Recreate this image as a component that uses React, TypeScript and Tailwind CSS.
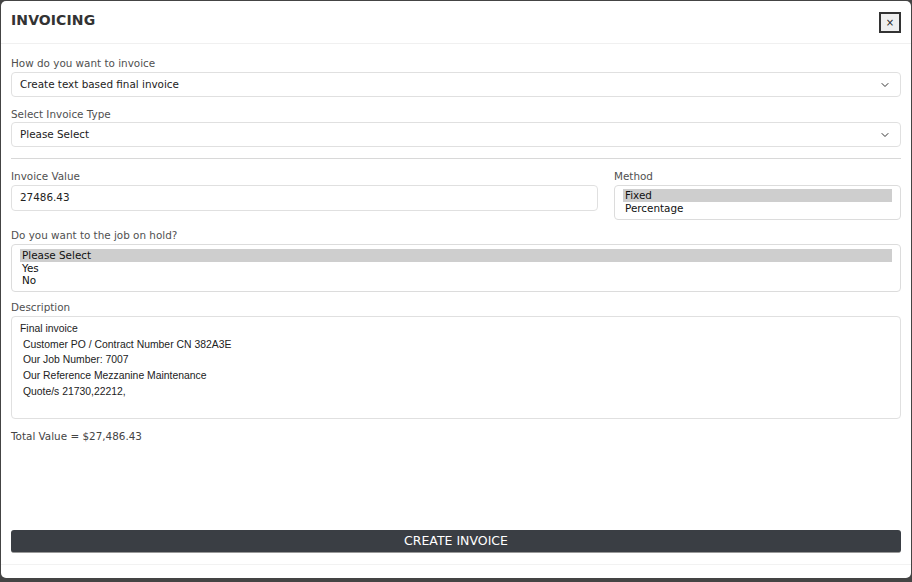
import React from "react";
import { ChevronDown } from "lucide-react";

const font = "font-['DejaVu_Sans',sans-serif]";

type ListBoxProps = {
  options: string[];
  selected: number;
  className?: string;
};

const ListBox = ({ options, selected, className }: ListBoxProps) => {
  return (
    <div className={`border border-[#dcdcdc] rounded-[4px] bg-white px-[8px] pb-[4px] ${className ?? ""}`}>
      {options.map((opt, i) => (
        <div
          key={opt}
          className={`text-[10.4px] leading-[12.5px] text-[#111] px-[2px] ${i === selected ? "bg-[#cecece]" : ""}`}
        >
          {opt}
        </div>
      ))}
    </div>
  );
};

const SelectBox = ({ value }: { value: string }) => {
  return (
    <div className="h-[25px] border border-[#e0e0e0] rounded-[4px] flex items-center justify-between pl-[8px] pr-[9px] text-[10.4px] text-[#222]">
      <span>{value}</span>
      <ChevronDown size={12} strokeWidth={2} className="text-[#333]" />
    </div>
  );
};

const Label = ({ children }: { children: React.ReactNode }) => (
  <p className="text-[10.4px] leading-[12px] text-[#505050] mb-[3px]">{children}</p>
);

const description = [
  "Final invoice",
  " Customer PO / Contract Number CN 382A3E",
  " Our Job Number: 7007",
  " Our Reference Mezzanine Maintenance",
  " Quote/s 21730,22212,",
];

export default function App() {
  return (
    <div className={`w-[912px] h-[582px] bg-[#444] pt-px px-px pb-[4px] ${font}`}>
      <div className="h-full bg-white rounded-[5px] flex flex-col overflow-hidden">
        <div className="h-[43px] flex items-center justify-between pl-[10px] pr-[10px] border-b border-[#f0f0f0] shrink-0">
          <h1 className="text-[14px] font-bold text-[#333] tracking-[0.1px] -mt-[3px]">INVOICING</h1>
          <button className="w-[22px] h-[21px] bg-[#efefef] border-2 border-[#333] flex items-center justify-center text-[10px] text-[#222] mt-[1px]">
            ×
          </button>
        </div>

        <div className="flex-1 px-[10px] pt-[13px] flex flex-col">
          <Label>How do you want to invoice</Label>
          <SelectBox value="Create text based final invoice" />

          <div className="mt-[11px]">
            <Label>Select Invoice Type</Label>
            <div className="-mt-px">
              <SelectBox value="Please Select" />
            </div>
          </div>

          <hr className="mt-[11px] border-t border-[#d8d8d8]" />

          <div className="mt-[11px] flex gap-[16px]">
            <div className="w-[587px]">
              <Label>Invoice Value</Label>
              <div className="h-[26px] border border-[#e0e0e0] rounded-[4px] flex items-center pl-[8px] text-[10.4px] text-[#222]">
                27486.43
              </div>
            </div>
            <div className="flex-1">
              <Label>Method</Label>
              <ListBox options={["Fixed", "Percentage"]} selected={0} className="h-[35px] mt-[1px] pt-[3px]" />
            </div>
          </div>

          <div className="mt-[9px]">
            <Label>Do you want to the job on hold?</Label>
            <ListBox options={["Please Select", "Yes", "No"]} selected={0} className="h-[48px] pt-[4px]" />
          </div>

          <div className="mt-[9px]">
            <Label>Description</Label>
            <div className="h-[103px] border border-[#e0e0e0] rounded-[4px] pl-[8px] pt-[4px] font-['Liberation_Sans',Arial,sans-serif] text-[10.4px] leading-[15.7px] text-[#222] whitespace-pre">
              {description.join("\n")}
            </div>
          </div>

          <p className="mt-[10px] text-[10.4px] text-[#444]">Total Value = $27,486.43</p>

          <div className="flex-1" />

          <button className="h-[23px] w-full bg-[#3a3e44] rounded-[3px] text-white text-[12.5px] border-b border-[#999] mb-[11px]">
            CREATE INVOICE
          </button>
        </div>

        <div className="h-[14px] border-t border-[#f2f2f2] shrink-0" />
      </div>
    </div>
  );
}
